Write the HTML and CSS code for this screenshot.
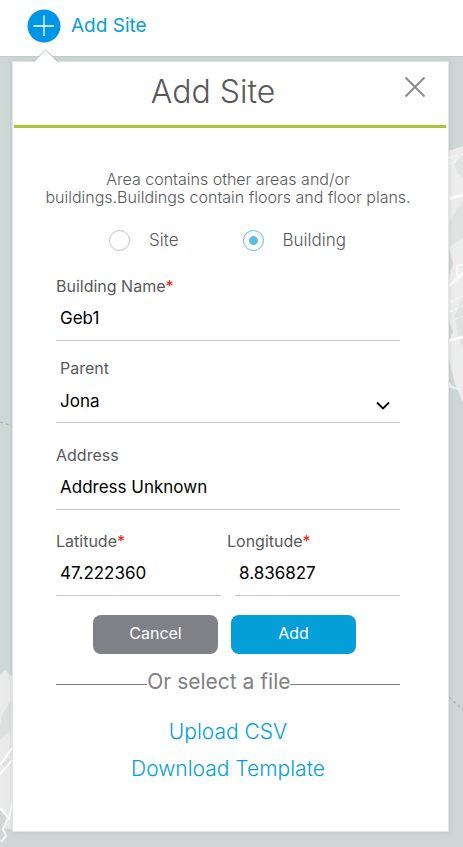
FILE: index.html
```html
<!DOCTYPE html>
<html lang="en">
<head>
<meta charset="utf-8">
<meta name="viewport" content="width=device-width, initial-scale=1">
<title>Add Site</title>
<link rel="stylesheet" href="styles.css">
</head>
<body>
<header class="topbar">
  <button class="add-trigger" type="button">
    <svg class="add-icon" viewBox="0 0 34 34" aria-hidden="true">
      <circle cx="17" cy="17" r="16.500" fill="#0096e8"/>
      <path d="M17 6.500v20.500M6.500 17h20.500" stroke="#fff" stroke-width="1.300" fill="none"/>
    </svg>
    <span>Add Site</span>
  </button>
</header>
<main class="map-area">
  <svg class="map" viewBox="0 0 463 790" preserveAspectRatio="none" aria-hidden="true">
    <path d="M448 94l15-5v257l-8-19-7-29v-14l5-9-5-13z" fill="#ededed"/>
    <path d="M455 106l8-8v22l-6-4zM449 165l14-22v38l-13 8zM455 258l8-18v50l-5-9z" fill="#e1e2e2"/>
    <path d="M448 187l5 20-5 14z" fill="#ced7d6"/>
    <path d="M448 142l15-4M448 230l15-14M448 284l15-4" stroke="#fafafa" stroke-width="3" fill="none"/>
    <path d="M449 101l14-4M449 107l12-4M450 245l12-6M450 255l12-6M450 265l12-6" stroke="#fbfbfb" stroke-width="1" stroke-dasharray="3 3" fill="none"/>
    <path d="M457 219v-11h6" stroke="#fff" fill="none"/>
    <path d="M448 324l6 6 6 1-1 2-11-3z" fill="#f3f3f3"/>
    <path d="M0 618l5-5 5 5h3v155l-9-2 3-13-7-8z" fill="#eaeaea"/>
    <path d="M3 656l8-12v29l-11 10v-14zM2 706l10-6v6l-9 4z" fill="#dedfdf"/>
    <path d="M0 708l13-18M0 717l13-15M0 751l9 11 3-17" stroke="#fff" stroke-width="2" fill="none"/>
    <path d="M8 760l-5 12 3 7-5 6" stroke="#f5f5f5" stroke-width="2" fill="none"/>
    <path d="M0 365l13 4M449 640l14 13" stroke="#b3b8b8" stroke-width="1.500" stroke-dasharray="3 3" fill="none"/>
  </svg>
  <section class="panel" aria-labelledby="panel-title">
    <svg class="pointer" viewBox="0 0 28 14" aria-hidden="true">
      <path d="M1 14L13.500 1 26.500 14z" fill="#fff"/>
      <path d="M1 13L13.500 1 26.500 13" fill="none" stroke="#b8bdbd"/>
    </svg>
    <div class="panel-head">
      <h1 class="title" id="panel-title">Add Site</h1>
      <button class="close" type="button" aria-label="Close">
        <svg viewBox="0 0 22 22" aria-hidden="true"><path d="M1.500 1.500l19 19M20.500 1.500l-19 19" stroke="#8c8c8c" stroke-width="2" fill="none"/></svg>
      </button>
    </div>
    <form class="form">
      <p class="intro">Area contains other areas and/or buildings.Buildings contain floors and floor plans.</p>
      <div class="kinds">
        <label class="kind"><input type="radio" name="kind">Site</label>
        <label class="kind"><input type="radio" name="kind" checked>Building</label>
      </div>
      <div class="field">
        <label for="name">Building Name<span class="req">*</span></label>
        <input id="name" type="text" value="Geb1">
      </div>
      <div class="field field-parent">
        <label for="parent">Parent</label>
        <div class="select-wrap">
          <select id="parent"><option>Jona</option></select>
          <svg class="chevron" viewBox="0 0 14 9" aria-hidden="true"><path d="M1 1.500l6 6 6-6" fill="none" stroke="#000" stroke-width="1.800"/></svg>
        </div>
      </div>
      <div class="field">
        <label for="address">Address</label>
        <input id="address" type="text" value="Address Unknown">
      </div>
      <div class="coords">
        <div class="field">
          <label for="lat">Latitude<span class="req">*</span></label>
          <input id="lat" type="text" value="47.222360">
        </div>
        <div class="field field-long">
          <label for="long">Longitude<span class="req">*</span></label>
          <input id="long" type="text" value="8.836827">
        </div>
      </div>
      <div class="actions">
        <button class="btn btn-cancel" type="button">Cancel</button>
        <button class="btn btn-add" type="button">Add</button>
      </div>
      <div class="divider">Or select a file</div>
      <div class="links">
        <a href="#upload">Upload CSV</a>
        <a href="#template">Download Template</a>
      </div>
    </form>
  </section>
</main>
</body>
</html>
```
FILE: styles.css
```css
* {
  box-sizing: border-box;
}

body {
  display: flex;
  flex-direction: column;
  min-height: 100vh;
  margin: 0;
  background: #ced7d6;
  color: #58595b;
  font-family: Inter, "Liberation Sans", sans-serif;
  font-size: 16px;
}

button,
input,
select {
  margin: 0;
  font-family: inherit;
}

.topbar {
  padding: 9px 27px 13px;
  background: #fff;
  border-bottom: 1px solid #c6caca;
}

.add-trigger {
  display: flex;
  align-items: center;
  gap: 10px;
  padding: 0;
  border: 0;
  background: none;
  color: #049fd9;
  font-size: 19px;
  line-height: 34px;
}

.add-icon {
  width: 34px;
  height: 34px;
}

.map-area {
  position: relative;
  flex: 1;
  padding: 4px 14px 14px 12px;
}

.map {
  position: absolute;
  inset: 0;
  width: 100%;
  height: 100%;
}

.panel {
  position: relative;
  padding-bottom: 44px;
  background: #fff;
  border: 1px solid #e2e5e4;
  box-shadow: 0 0 5px rgba(150, 160, 160, 0.3);
}

.pointer {
  position: absolute;
  top: -13px;
  left: 19px;
  width: 28px;
  height: 14px;
}

.panel-head {
  display: flex;
  align-items: flex-start;
  margin: 0 2px 0 1px;
  padding: 0 20px 0 8px;
  border-bottom: 3px solid #abc233;
}

.title {
  flex: 1;
  margin: 0;
  padding: 8px 0 11px;
  font-size: 32px;
  font-weight: 300;
  line-height: 44px;
  text-align: center;
}

.close {
  margin-top: 14px;
  padding: 0;
  border: 0;
  background: none;
}

.close svg {
  display: block;
  width: 22px;
  height: 22px;
}

.form {
  padding: 42px 48px 0 43px;
}

.intro {
  margin: 0 -16px 23px;
  font-size: 16px;
  font-weight: 300;
  line-height: 18px;
  text-align: center;
}

.kinds {
  display: flex;
  gap: 64px;
  margin-bottom: 26px;
  padding-left: 53px;
}

.kind {
  display: flex;
  align-items: center;
  gap: 19px;
  font-size: 17px;
  font-weight: 300;
  line-height: 22px;
}

.kind input {
  appearance: none;
  width: 21px;
  height: 21px;
  margin: 0;
  border: 1px solid #c3c3c3;
  border-radius: 50%;
}

.kind input:checked {
  border-color: #5bbfde;
  background: radial-gradient(circle, #5bbfde 4px, transparent 5px);
}

.field {
  display: flex;
  flex-direction: column;
  gap: 1px;
  margin-bottom: 22px;
  min-width: 0;
}

.field label {
  font-size: 16px;
  line-height: 18px;
}

.field input,
.field select {
  width: 100%;
  height: 45px;
  padding: 0 4px;
  border: 0;
  border-bottom: 1px solid #c4c4c4;
  border-radius: 0;
  outline: 0;
  background: transparent;
  color: #000;
  font-size: 17px;
}

.field select {
  padding-top: 2px;
  appearance: none;
}

.field:has(+ .field-parent) {
  margin-bottom: 18px;
}

.field-parent {
  margin-bottom: 23px;
}

.field-parent label {
  padding-left: 4px;
}

.select-wrap {
  position: relative;
}

.chevron {
  position: absolute;
  right: 10px;
  top: 23px;
  width: 14px;
  height: 9px;
  pointer-events: none;
}

.req {
  color: #f01414;
}

.coords {
  display: grid;
  grid-template-columns: 1fr 1fr;
  gap: 14px;
  margin-bottom: 19px;
}

.coords .field {
  margin-bottom: 0;
}

.field-long label {
  margin-left: -8px;
}

.actions {
  display: flex;
  justify-content: center;
  gap: 13px;
  padding-right: 7px;
}

.btn {
  width: 125px;
  height: 39px;
  padding: 0 0 4px;
  border: 0;
  border-radius: 8px;
  color: #fff;
  font-size: 16px;
}

.btn-cancel {
  background: #808187;
}

.btn-add {
  background: #049fd9;
}

.divider {
  display: flex;
  align-items: center;
  margin-top: 14px;
  color: #808080;
  font-size: 21px;
  line-height: 28px;
}

.divider::before,
.divider::after {
  content: "";
  margin-top: 4px;
  border-top: 1px solid #808080;
}

.divider::before {
  flex: 90;
}

.divider::after {
  flex: 108;
}

.links {
  display: flex;
  flex-direction: column;
  align-items: center;
  margin-top: 17px;
}

.links a {
  color: #049fd9;
  font-size: 21px;
  font-weight: 300;
  line-height: 37px;
  text-decoration: none;
}
```
